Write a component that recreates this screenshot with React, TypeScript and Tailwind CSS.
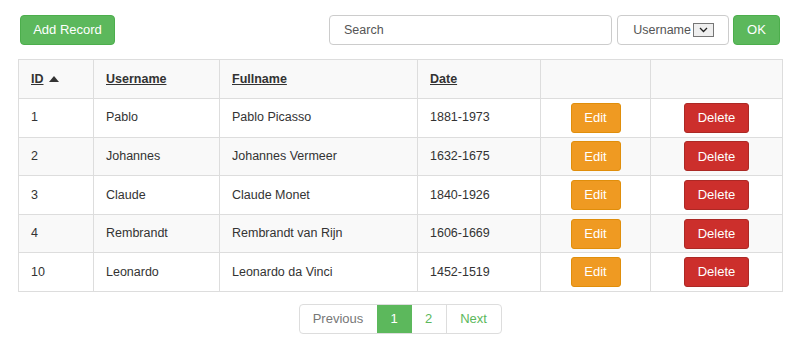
import React from 'react';

interface Row {
  id: number;
  username: string;
  fullname: string;
  date: string;
}

const rows: Row[] = [
  { id: 1, username: 'Pablo', fullname: 'Pablo Picasso', date: '1881-1973' },
  { id: 2, username: 'Johannes', fullname: 'Johannes Vermeer', date: '1632-1675' },
  { id: 3, username: 'Claude', fullname: 'Claude Monet', date: '1840-1926' },
  { id: 4, username: 'Rembrandt', fullname: 'Rembrandt van Rijn', date: '1606-1669' },
  { id: 10, username: 'Leonardo', fullname: 'Leonardo da Vinci', date: '1452-1519' },
];

export default function App() {
  return (
    <div
      className="w-[800px] h-[349px] bg-white px-[18px] pt-[15px] text-[12.5px] text-[#333]"
      style={{ fontFamily: '"Liberation Sans", Arial, sans-serif' }}
    >
      {/* Toolbar */}
      <div className="flex items-center px-[2px]">
        <button className="h-[30px] w-[95px] rounded-[4px] border border-[#4cae4c] bg-[#5cb85c] text-white text-[13px]">
          Add Record
        </button>
        <div className="ml-auto flex items-center">
          <div className="h-[30px] w-[283px] rounded-[4px] border border-[#ccc] bg-white flex items-center px-[14px] text-[#555]">
            Search
          </div>
          <div className="ml-[5px] h-[30px] w-[112px] rounded-[4px] border border-[#ccc] bg-white flex items-center justify-end pr-[14px] text-[#555]">
            <span>Username</span>
            <span className="ml-[2px] w-[21px] h-[14px] border border-[#767676] bg-[#efefef] flex items-center justify-center">
              <svg width="9" height="6" viewBox="0 0 9 6">
                <path d="M1 1l3.5 3.5L8 1" fill="none" stroke="#222" strokeWidth="1.3" />
              </svg>
            </span>
          </div>
          <button className="ml-[4px] h-[30px] w-[47px] rounded-[4px] border border-[#4cae4c] bg-[#5cb85c] text-white text-[13px]">
            OK
          </button>
        </div>
      </div>

      {/* Table */}
      <table className="mt-[14px] w-[764px] border-collapse table-fixed border border-[#ddd]">
        <colgroup>
          <col className="w-[75px]" />
          <col className="w-[126px]" />
          <col className="w-[198px]" />
          <col className="w-[123px]" />
          <col className="w-[110px]" />
          <col className="w-[132px]" />
        </colgroup>
        <thead>
          <tr className="h-[39px] bg-[#f9f9f9]">
            <th className="border border-[#ddd] px-3 text-left font-bold">
              <span className="underline">ID</span>
              <svg className="inline-block ml-[5px] align-[1px]" width="10" height="6" viewBox="0 0 10 6">
                <path d="M0 6L5 0l5 6z" fill="#333" />
              </svg>
            </th>
            <th className="border border-[#ddd] px-3 text-left font-bold underline">Username</th>
            <th className="border border-[#ddd] px-3 text-left font-bold underline">Fullname</th>
            <th className="border border-[#ddd] px-3 text-left font-bold underline">Date</th>
            <th className="border border-[#ddd]"></th>
            <th className="border border-[#ddd]"></th>
          </tr>
        </thead>
        <tbody>
          {rows.map((r, i) => (
            <tr key={r.id} className={`h-[38.6px] ${i % 2 === 1 ? 'bg-[#f9f9f9]' : 'bg-white'}`}>
              <td className="border border-[#ddd] px-3">{r.id}</td>
              <td className="border border-[#ddd] px-3">{r.username}</td>
              <td className="border border-[#ddd] px-3">{r.fullname}</td>
              <td className="border border-[#ddd] px-3">{r.date}</td>
              <td className="border border-[#ddd] text-center">
                <button className="h-[30px] w-[50px] rounded-[3px] border border-[#e08e0b] bg-[#ef9a22] text-white text-[13px] align-middle">
                  Edit
                </button>
              </td>
              <td className="border border-[#ddd] text-center">
                <button className="h-[30px] w-[65px] rounded-[3px] border border-[#ac2925] bg-[#cc2f2c] text-white text-[13px] align-middle">
                  Delete
                </button>
              </td>
            </tr>
          ))}
        </tbody>
      </table>

      {/* Pagination */}
      <div className="mt-[12px] flex justify-center">
        <div className="flex h-[30px] rounded-[4px] border border-[#ddd] overflow-hidden text-[13px]">
          <span className="w-[77px] flex items-center justify-center text-[#777]">Previous</span>
          <span className="w-[35px] flex items-center justify-center bg-[#5cb85c] text-white">1</span>
          <span className="w-[35px] flex items-center justify-center text-[#5cb85c] border-r border-[#ddd]">2</span>
          <span className="w-[54px] flex items-center justify-center text-[#5cb85c]">Next</span>
        </div>
      </div>
    </div>
  );
}
